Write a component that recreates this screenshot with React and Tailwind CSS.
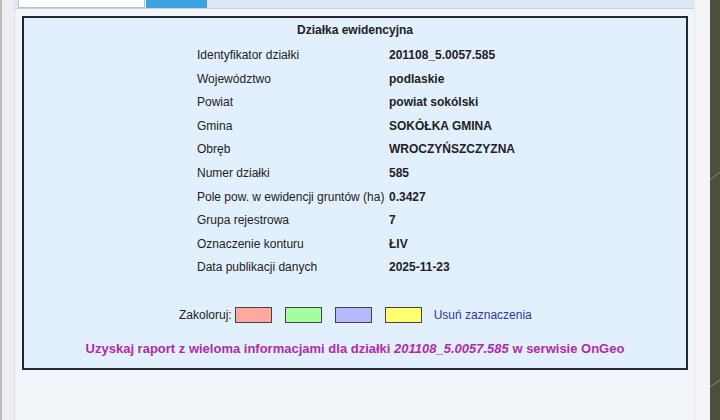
const rows = [
  ['Identyfikator działki', '201108_5.0057.585'],
  ['Województwo', 'podlaskie'],
  ['Powiat', 'powiat sokólski'],
  ['Gmina', 'SOKÓŁKA GMINA'],
  ['Obręb', 'WROCZYŃSZCZYZNA'],
  ['Numer działki', '585'],
  ['Pole pow. w ewidencji gruntów (ha)', '0.3427'],
  ['Grupa rejestrowa', '7'],
  ['Oznaczenie konturu', 'ŁIV'],
  ['Data publikacji danych', '2025-11-23'],
]

const swatches = ['bg-[#ffa8a0]', 'bg-[#a4ffa0]', 'bg-[#b8b8ff]', 'bg-[#ffff70]']

export default function App() {
  return (
    <div className="flex w-[720px] h-[420px] overflow-hidden text-[12px] text-[#222]" style={{ fontFamily: '"Liberation Sans", Arial, sans-serif' }}>
      {/* left edge */}
      <div className="w-[2px] bg-[#b9bcbf]" />
      <div className="w-[13px] bg-[#eceef0] border-r border-[#dfe3e7]" />

      {/* main panel */}
      <div className="w-[679px] bg-[#f1f4f8] flex flex-col">
        <div className="h-[9px] flex pl-[3px] bg-[#dde9f5] border-b border-[#c9d3dd]">
          <div className="w-[127px] bg-white border border-t-0 border-[#b8c2cc]" />
          <div className="w-[61px] ml-[1px] bg-[#3aa3e0]" />
        </div>

        <div className="mt-[7px] ml-[7px] mr-[6px] h-[354px] border-2 border-[#25282c] bg-[#e2effd] flex flex-col">
          <div className="pt-[4px] text-center font-bold leading-[16px]">Działka ewidencyjna</div>
          <div className="mt-[6px] ml-[173px] grid grid-cols-[192px_150px]">
            {rows.map(([k, v]) => (
              <div key={k} className="contents">
                <div className="leading-[23.6px]">{k}</div>
                <div className="leading-[23.6px] font-bold">{v}</div>
              </div>
            ))}
          </div>

          <div className="mt-[26px] flex items-center">
            <span className="ml-[155px] mr-[3px]">Zakoloruj:</span>
            <div className="flex gap-[13px]">
              {swatches.map((c) => (
                <div key={c} className={`w-[37px] h-[16px] border border-[#444] ${c}`} />
              ))}
            </div>
            <span className="ml-[12px] text-[#2e34a8]">Usuń zaznaczenia</span>
          </div>

          <div className="mt-[15px] text-center font-bold text-[13px] text-[#b02ba6]">
            Uzyskaj raport z wieloma informacjami dla działki <i>201108_5.0057.585</i> w serwisie OnGeo
          </div>
        </div>
      </div>

      {/* right edge */}
      <div className="w-[16px] bg-[#f3f5f7] border-l border-[#e3e7eb]" />
      <div className="w-[10px] bg-[#4b4f3c]">
        <svg width="10" height="420" viewBox="0 0 10 420">
          <path d="M0 180 L10 172" stroke="#6f8fa8" strokeWidth="1" fill="none" />
          <path d="M0 387 L10 380" stroke="#6f8fa8" strokeWidth="1" fill="none" />
        </svg>
      </div>
    </div>
  )
}
